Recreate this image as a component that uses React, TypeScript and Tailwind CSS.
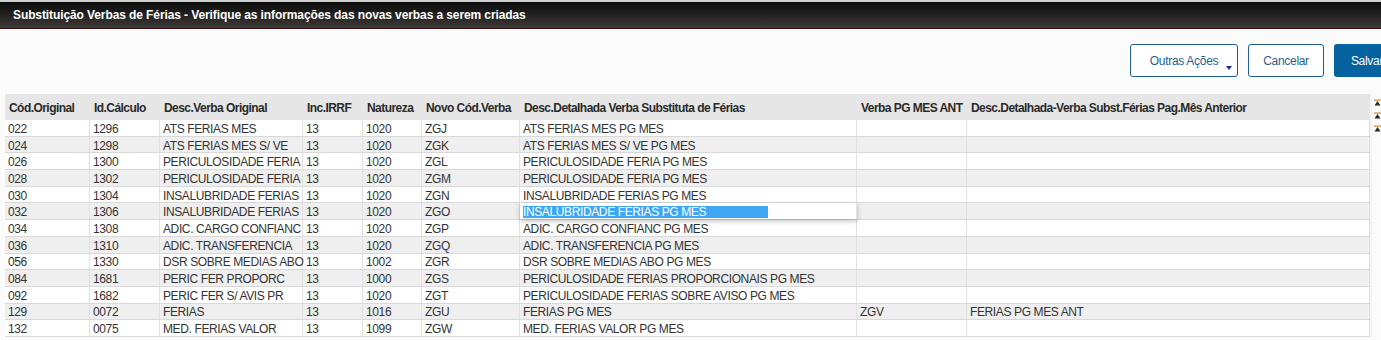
import React from "react";

type Row = {
  cod: string;
  id: string;
  desc: string;
  irrf: string;
  nat: string;
  novo: string;
  det: string;
  ant: string;
  detAnt: string;
};

const rows: Row[] = [
  { cod: "022", id: "1296", desc: "ATS FERIAS MES", irrf: "13", nat: "1020", novo: "ZGJ", det: "ATS FERIAS MES PG MES", ant: "", detAnt: "" },
  { cod: "024", id: "1298", desc: "ATS FERIAS MES S/ VE", irrf: "13", nat: "1020", novo: "ZGK", det: "ATS FERIAS MES S/ VE PG MES", ant: "", detAnt: "" },
  { cod: "026", id: "1300", desc: "PERICULOSIDADE FERIA", irrf: "13", nat: "1020", novo: "ZGL", det: "PERICULOSIDADE FERIA PG MES", ant: "", detAnt: "" },
  { cod: "028", id: "1302", desc: "PERICULOSIDADE FERIA", irrf: "13", nat: "1020", novo: "ZGM", det: "PERICULOSIDADE FERIA PG MES", ant: "", detAnt: "" },
  { cod: "030", id: "1304", desc: "INSALUBRIDADE FERIAS", irrf: "13", nat: "1020", novo: "ZGN", det: "INSALUBRIDADE FERIAS PG MES", ant: "", detAnt: "" },
  { cod: "032", id: "1306", desc: "INSALUBRIDADE FERIAS", irrf: "13", nat: "1020", novo: "ZGO", det: "INSALUBRIDADE FERIAS PG MES", ant: "", detAnt: "" },
  { cod: "034", id: "1308", desc: "ADIC. CARGO CONFIANC", irrf: "13", nat: "1020", novo: "ZGP", det: "ADIC. CARGO CONFIANC PG MES", ant: "", detAnt: "" },
  { cod: "036", id: "1310", desc: "ADIC. TRANSFERENCIA", irrf: "13", nat: "1020", novo: "ZGQ", det: "ADIC. TRANSFERENCIA PG MES", ant: "", detAnt: "" },
  { cod: "056", id: "1330", desc: "DSR SOBRE MEDIAS ABO", irrf: "13", nat: "1002", novo: "ZGR", det: "DSR SOBRE MEDIAS ABO PG MES", ant: "", detAnt: "" },
  { cod: "084", id: "1681", desc: "PERIC FER PROPORC", irrf: "13", nat: "1000", novo: "ZGS", det: "PERICULOSIDADE FERIAS PROPORCIONAIS PG MES", ant: "", detAnt: "" },
  { cod: "092", id: "1682", desc: "PERIC FER S/ AVIS PR", irrf: "13", nat: "1020", novo: "ZGT", det: "PERICULOSIDADE FERIAS SOBRE AVISO PG MES", ant: "", detAnt: "" },
  { cod: "129", id: "0072", desc: "FERIAS", irrf: "13", nat: "1016", novo: "ZGU", det: "FERIAS PG MES", ant: "ZGV", detAnt: "FERIAS PG MES ANT" },
  { cod: "132", id: "0075", desc: "MED. FERIAS VALOR", irrf: "13", nat: "1099", novo: "ZGW", det: "MED. FERIAS VALOR PG MES", ant: "", detAnt: "" },
];

const cols = [
  { key: "cod", label: "Cód.Original", w: "w-[85px]" },
  { key: "id", label: "Id.Cálculo", w: "w-[70px]" },
  { key: "desc", label: "Desc.Verba Original", w: "w-[143px]" },
  { key: "irrf", label: "Inc.IRRF", w: "w-[60px]" },
  { key: "nat", label: "Natureza", w: "w-[59px]" },
  { key: "novo", label: "Novo Cód.Verba", w: "w-[98px]" },
  { key: "det", label: "Desc.Detalhada Verba Substituta de Férias", w: "w-[337px]" },
  { key: "ant", label: "Verba PG MES ANT", w: "w-[110px]" },
  { key: "detAnt", label: "Desc.Detalhada-Verba Subst.Férias Pag.Mês Anterior", w: "w-[403px]" },
] as const;

function SideIcon() {
  return (
    <svg width="7" height="7" viewBox="0 0 7 7">
      <path d="M0.5 6.5 L3.5 2 L6.5 6.5 Z" fill="#2b2b2b" />
      <rect x="0" y="0.5" width="7" height="1.2" fill="#d08a2c" />
    </svg>
  );
}

export default function App() {
  return (
    <div className="w-[1381px] h-[340px] overflow-hidden bg-[#fbfbfb] font-['Liberation_Sans',Arial,sans-serif]">
      <div className="border-t-2 border-[#cfcfcf]">
        <div className="h-[27px] flex items-center pl-[13px] bg-gradient-to-b from-[#0b0b0b] to-[#3d3b39] border-b border-[#3a0d10]">
          <span className="text-white font-bold text-[12px] tracking-[-0.1px]">
            Substituição Verbas de Férias - Verifique as informações das novas verbas a serem criadas
          </span>
        </div>
      </div>

      <div className="flex justify-end gap-[10px] pt-[15px] mr-[-29px]">
        <button className="relative w-[108px] h-[33px] rounded-[3px] border border-[#1f5f94] bg-white text-[12px] text-[#1f5f94] tracking-[-0.3px]">
          Outras Ações
          <span className="absolute right-[5px] bottom-[6px] w-0 h-0 border-l-[3px] border-r-[3px] border-t-[4px] border-l-transparent border-r-transparent border-t-[#1a2f8a]" />
        </button>
        <button className="w-[76px] h-[33px] rounded-[3px] border border-[#1f5f94] bg-white text-[12px] text-[#1f5f94] tracking-[-0.3px]">
          Cancelar
        </button>
        <button className="w-[76px] h-[33px] rounded-[3px] bg-[#05639f] text-[12px] text-white pr-[10px] tracking-[-0.3px]">
          Salvar
        </button>
      </div>

      <div className="flex mt-[17px] pl-[5px]">
        <div className="text-[12px] text-[#333] tracking-[-0.38px]">
          <div className="flex h-[26px] bg-[#e6e6e6] items-center font-bold text-[#2a2a2a] tracking-[-0.55px]">
            {cols.map((c) => (
              <div key={c.key} className={`${c.w} pl-[4px] pt-[1px] whitespace-nowrap`}>
                {c.label}
              </div>
            ))}
          </div>
          {rows.map((r, i) => (
            <div
              key={r.cod}
              className={`flex h-[16.7px] items-center border-b border-[#d9d9d9] ${i % 2 === 0 ? "bg-white" : "bg-[#efefef]"}`}
            >
              {cols.map((c) => {
                const editing = i === 5 && c.key === "det";
                return (
                  <div
                    key={c.key}
                    className={`${c.w} h-full flex items-center pl-[3px] pt-[2px] whitespace-nowrap border-r border-[#e2e2e2] ${editing ? "bg-white shadow-[0_2px_5px_rgba(0,0,0,0.25)] relative z-10" : ""}`}
                  >
                    {editing ? (
                      <span className="bg-[#41a7f4] text-white w-[245px] leading-[12px]">{r[c.key]}</span>
                    ) : (
                      r[c.key]
                    )}
                  </div>
                );
              })}
            </div>
          ))}
        </div>
        <div className="w-[3px] bg-[#f4f4f4]" />
        <div className="flex flex-col gap-[6px] pt-[5px] pl-[2px]">
          <SideIcon />
          <SideIcon />
          <SideIcon />
        </div>
      </div>
    </div>
  );
}
